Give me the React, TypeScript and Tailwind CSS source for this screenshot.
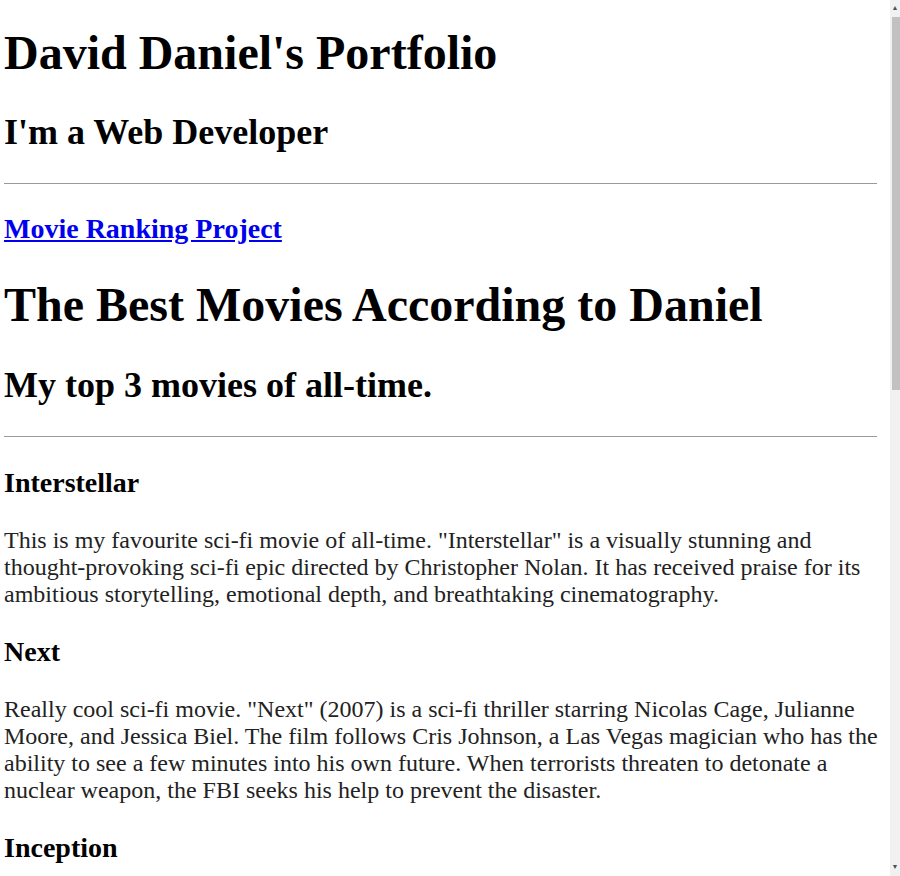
import React from "react";

const movies = [
  {
    title: "Interstellar",
    text: 'This is my favourite sci-fi movie of all-time. "Interstellar" is a visually stunning and thought-provoking sci-fi epic directed by Christopher Nolan. It has received praise for its ambitious storytelling, emotional depth, and breathtaking cinematography.',
  },
  {
    title: "Next",
    text: 'Really cool sci-fi movie. "Next" (2007) is a sci-fi thriller starring Nicolas Cage, Julianne Moore, and Jessica Biel. The film follows Cris Johnson, a Las Vegas magician who has the ability to see a few minutes into his own future. When terrorists threaten to detonate a nuclear weapon, the FBI seeks his help to prevent the disaster.',
  },
  {
    title: "Inception",
    text: "",
  },
];

const App = () => {
  return (
    <div className="flex h-[876px] overflow-hidden bg-white font-['Liberation_Serif','Times_New_Roman',serif] text-black">
      <div className="flex-1 pl-[4px] pr-[13px]">
        <h1 className="mt-[25px] text-[48px] leading-[55px] font-bold">David Daniel's Portfolio</h1>
        <h2 className="mt-[32px] text-[36px] leading-[41px] font-bold">I'm a Web Developer</h2>
        <hr className="mt-[30px] border-t border-[#9a9a9a]" />
        <h3 className="mt-[29px] text-[28px] leading-[32px] font-bold">
          <a href="#" className="text-[#0000ee] underline">
            Movie Ranking Project
          </a>
        </h3>
        <h1 className="mt-[32px] text-[48px] leading-[55px] font-bold">The Best Movies According to Daniel</h1>
        <h2 className="mt-[33px] text-[36px] leading-[41px] font-bold">My top 3 movies of all-time.</h2>
        <hr className="mt-[30px] border-t border-[#9a9a9a]" />
        {movies.map((m, i) => (
          <div key={m.title}>
            <h3 className={i === 0 ? "mt-[30px] text-[28px] leading-[32px] font-bold" : "mt-[28px] text-[28px] leading-[32px] font-bold"}>
              {m.title}
            </h3>
            {m.text && <p className="mt-[28px] mr-[-6px] text-[24px] leading-[27px] text-[#222]">{m.text}</p>}
          </div>
        ))}
      </div>
      <div className="flex w-[10px] flex-col bg-[#f1f1f1]">
        <div className="flex h-[17px] items-center justify-center text-[7px] leading-none text-[#505050]">▲</div>
        <div className="ml-[2px] h-[373px] bg-[#c1c1c1]" />
        <div className="flex-1" />
        <div className="flex h-[17px] items-center justify-center text-[7px] leading-none text-[#505050]">▼</div>
      </div>
    </div>
  );
};

export default App;
